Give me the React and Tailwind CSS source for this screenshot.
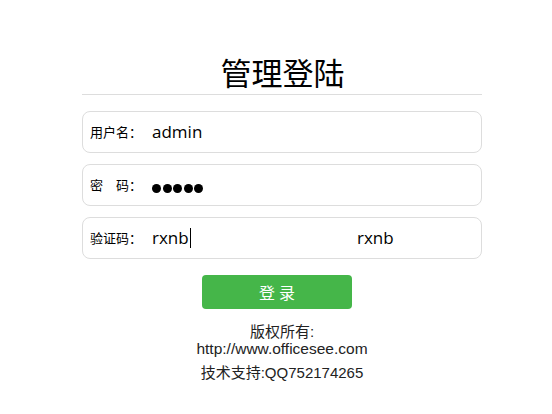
export default function App() {
  const cjk = { fontFamily: '"Noto Sans CJK SC", "Noto Sans", sans-serif' };
  const lat = { fontFamily: '"Open Sans", sans-serif' };
  return (
    <div className="w-[552px] h-[414px] bg-white" style={cjk}>
      <div className="w-[400px] ml-[82px] pt-[52px] flex flex-col">
        <h1 className="text-center text-[31px] leading-[40px] text-black pl-[1px]">管理登陆</h1>
        <div className="h-px bg-[#dddddd] mt-[2px]"></div>
        <div className="mt-[16px] flex flex-col gap-[11px]">
          <div className="h-[42px] border border-[#dddddd] rounded-[8px] flex items-center pl-[7px]">
            <span className="w-[62px] text-[13px] text-black">用户名：</span>
            <span className="text-[17px] text-black" style={lat}>admin</span>
          </div>
          <div className="h-[42px] border border-[#dddddd] rounded-[8px] flex items-center pl-[7px]">
            <span className="w-[62px] text-[13px] text-black whitespace-pre">密　码：</span>
            <span className="flex gap-[1.5px] items-center mt-[6px]">
              <span className="w-[9px] h-[9px] rounded-full bg-black"></span>
              <span className="w-[9px] h-[9px] rounded-full bg-black"></span>
              <span className="w-[9px] h-[9px] rounded-full bg-black"></span>
              <span className="w-[9px] h-[9px] rounded-full bg-black"></span>
              <span className="w-[9px] h-[9px] rounded-full bg-black"></span>
            </span>
          </div>
          <div className="h-[42px] border border-[#dddddd] rounded-[8px] flex items-center pl-[7px]">
            <span className="w-[62px] text-[13px] text-black">验证码：</span>
            <span className="w-[205px] text-[17px] text-black flex items-center" style={lat}>rxnb<span className="inline-block w-px h-[20px] bg-black ml-px"></span></span>
            <span className="text-[17px] text-black" style={lat}>rxnb</span>
          </div>
        </div>
        <div className="mt-[16px] flex">
          <button className="ml-[120px] w-[150px] h-[34px] bg-[#45b649] rounded-[4px] text-white text-[16px] tracking-[4px] pl-[4px]">登录</button>
        </div>
        <div className="mt-[14px] text-center text-[15px] text-[#222] leading-[17px]" style={{ fontFamily: '"Liberation Sans", "Noto Sans CJK SC", sans-serif' }}>
          <div>版权所有:</div>
          <div className="text-[15.5px]">http://www.officesee.com</div>
          <div className="mt-[7px]">技术支持:QQ752174265</div>
        </div>
      </div>
    </div>
  );
}
